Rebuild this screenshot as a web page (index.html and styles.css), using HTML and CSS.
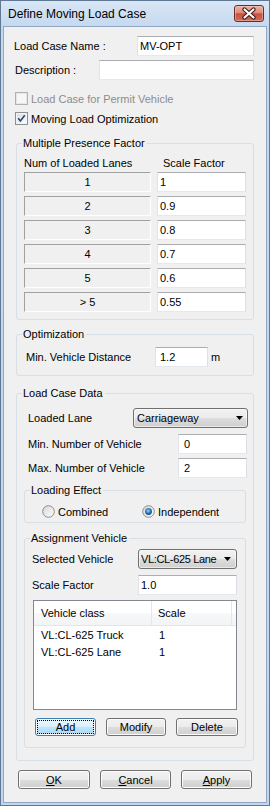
FILE: index.html
```html
<!DOCTYPE html>
<html>
<head>
<meta charset="utf-8">
<link rel="stylesheet" href="styles.css">
</head>
<body>
<div class="window">
  <div class="titlebar">
    <span class="title">Define Moving Load Case</span>
    <div class="close-btn">
      <svg width="28" height="15" viewBox="0 0 28 15">
        <path d="M9.5 3.5 L18.5 11.5 M18.5 3.5 L9.5 11.5" stroke="#3d1511" stroke-width="4.2" stroke-linecap="round" fill="none"/>
        <path d="M9.5 3.5 L18.5 11.5 M18.5 3.5 L9.5 11.5" stroke="#ffffff" stroke-width="2.2" stroke-linecap="round" fill="none"/>
      </svg>
    </div>
  </div>
  <div class="client">
    <div class="field-row r-name"><span class="lbl w-name">Load Case Name :</span><div class="tb w-name-tb">MV-OPT</div></div>
    <div class="field-row r-desc"><span class="lbl w-desc">Description :</span><div class="tb w-desc-tb"></div></div>

    <div class="check-row c1 disabled">
      <svg class="chk" width="13" height="13" viewBox="0 0 13 13"><rect x="0.5" y="0.5" width="12" height="12" fill="#f4f4f4" stroke="#b1b1b1"/><rect x="1.5" y="1.5" width="10" height="10" fill="#f7f7f7" stroke="#e6e6e6"/></svg>
      <span>Load Case for Permit Vehicle</span>
    </div>
    <div class="check-row c2">
      <svg class="chk" width="13" height="13" viewBox="0 0 13 13">
        <defs><linearGradient id="cg" x1="0" y1="0" x2="1" y2="1"><stop offset="0" stop-color="#dedede"/><stop offset="1" stop-color="#fbfbfb"/></linearGradient></defs>
        <rect x="0.5" y="0.5" width="12" height="12" fill="#f4f4f4" stroke="#8f8f8f"/>
        <rect x="2" y="2" width="9" height="9" fill="url(#cg)"/>
        <path d="M3.2 6.3 L5.4 9 L9.8 3.2" stroke="#2c4a82" stroke-width="1.7" fill="none"/>
      </svg>
      <span>Moving Load Optimization</span>
    </div>

    <div class="group g-mpf">
      <span class="legend">Multiple Presence Factor</span>
      <div class="mpf-grid mpf-head"><span>Num of Loaded Lanes</span><span class="sf">Scale Factor</span></div>
      <div class="mpf-grid mpf-rows">
        <div class="sunken">1</div><div class="tb">1</div>
        <div class="sunken">2</div><div class="tb">0.9</div>
        <div class="sunken">3</div><div class="tb">0.8</div>
        <div class="sunken">4</div><div class="tb">0.7</div>
        <div class="sunken">5</div><div class="tb">0.6</div>
        <div class="sunken">&gt; 5</div><div class="tb">0.55</div>
      </div>
    </div>

    <div class="group g-opt">
      <span class="legend">Optimization</span>
      <div class="opt-row"><span class="lbl w-opt">Min. Vehicle Distance</span><div class="tb w-opt-tb">1.2</div><span class="unit">m</span></div>
    </div>

    <div class="group g-lcd">
      <span class="legend">Load Case Data</span>
      <div class="lcd-row"><span class="lbl w-lane">Loaded Lane</span>
        <div class="combo w-lane-cb"><span class="ctext">Carriageway</span><svg class="arrow" width="7" height="4" viewBox="0 0 7 4"><path d="M0 0H7L3.5 4Z" fill="#000"/></svg></div>
      </div>
      <div class="lcd-row r-min"><span class="lbl w-num">Min. Number of Vehicle</span><div class="tb w-num-tb">0</div></div>
      <div class="lcd-row r-max"><span class="lbl w-num">Max. Number of Vehicle</span><div class="tb w-num-tb">2</div></div>

      <div class="group g-le">
        <span class="legend">Loading Effect</span>
        <div class="radio-row">
          <div class="radio">
            <svg width="13" height="13" viewBox="0 0 13 13">
              <defs><linearGradient id="rg" x1="0" y1="0" x2="1" y2="1"><stop offset="0" stop-color="#d8d8d8"/><stop offset="1" stop-color="#fcfcfc"/></linearGradient></defs>
              <circle cx="6.5" cy="6.5" r="5.8" fill="url(#rg)" stroke="#8c8c8c"/>
            </svg>
            <span>Combined</span>
          </div>
          <div class="radio">
            <svg width="13" height="13" viewBox="0 0 13 13">
              <defs>
                <linearGradient id="rg2" x1="0" y1="0" x2="1" y2="1"><stop offset="0" stop-color="#d8d8d8"/><stop offset="1" stop-color="#fcfcfc"/></linearGradient>
                <radialGradient id="dot" cx="0.45" cy="0.4" r="0.6"><stop offset="0" stop-color="#a5dcfb"/><stop offset="0.45" stop-color="#3d8fd0"/><stop offset="1" stop-color="#0d3e75"/></radialGradient>
              </defs>
              <circle cx="6.5" cy="6.5" r="5.8" fill="url(#rg2)" stroke="#8c8c8c"/>
              <circle cx="6.5" cy="6.5" r="3.4" fill="url(#dot)"/>
            </svg>
            <span>Independent</span>
          </div>
        </div>
      </div>

      <div class="group g-av">
        <span class="legend">Assignment Vehicle</span>
        <div class="av-row"><span class="lbl w-av">Selected Vehicle</span>
          <div class="combo w-av-cb"><span class="ctext tight">VL:CL-625 Lane</span><svg class="arrow" width="7" height="4" viewBox="0 0 7 4"><path d="M0 0H7L3.5 4Z" fill="#000"/></svg></div>
        </div>
        <div class="av-row r-scale"><span class="lbl w-av">Scale Factor</span><div class="tb w-av-cb">1.0</div></div>
        <div class="list">
          <div class="list-head"><span class="hcell">Vehicle class</span><span class="hcell">Scale</span></div>
          <div class="list-body">
            <div class="list-row"><span>VL:CL-625 Truck</span><span>1</span></div>
            <div class="list-row"><span>VL:CL-625 Lane</span><span>1</span></div>
          </div>
        </div>
        <div class="btn-row">
          <div class="btn default w-add">Add</div>
          <div class="btn w-mod">Modify</div>
          <div class="btn w-del">Delete</div>
        </div>
      </div>
    </div>

    <div class="bottom-row">
      <div class="btn big w-ok"><span><u>O</u>K</span></div>
      <div class="btn big w-cancel"><span><u>C</u>ancel</span></div>
      <div class="btn big w-apply"><span><u>A</u>pply</span></div>
    </div>
  </div>
</div>
</body>
</html>
```

FILE: styles.css
```css
html, body {
  margin: 0;
  padding: 0;
  background: #ffffff;
}

.window {
  width: 270px;
  height: 806px;
  box-sizing: border-box;
  border: 1px solid #5f7894;
  background: linear-gradient(#d9e7f6 0, #c4d8ee 26px, #c2d6ec 100%);
  padding: 0 3px 3px 3px;
  display: flex;
  flex-direction: column;
}

.titlebar {
  height: 26px;
  flex-shrink: 0;
  display: flex;
  align-items: flex-start;
}

.title {
  font-family: "Liberation Sans", Arial, sans-serif;
  font-size: 12px;
  line-height: 15px;
  color: #000;
  margin: 6px 0 0 4px;
}

.close-btn {
  margin: 4px 2px 0 auto;
  width: 30px;
  height: 17px;
  box-sizing: border-box;
  border: 1px solid #6b2b26;
  border-radius: 3px;
  background: linear-gradient(#ebb3a9 0%, #dc8a7c 45%, #c9503f 52%, #cf6d58 100%);
  box-shadow: inset 0 0 0 1px rgba(255, 210, 200, 0.45);
}

.close-btn svg {
  display: block;
}

.client {
  flex: 1;
  background: #f0f0f0;
  box-shadow: 0 0 0 1px #90a8c3;
  display: flex;
  flex-direction: column;
  font-family: "Liberation Sans", Arial, sans-serif;
  font-size: 11px;
  color: #000;
}

.client > * {
  flex-shrink: 0;
}

.lbl {
  white-space: nowrap;
  flex-shrink: 0;
}

.tb {
  box-sizing: border-box;
  height: 20px;
  background: #ffffff;
  border: 1px solid;
  border-color: #abadb3 #dbdfe6 #e3e9ef #e2e3ea;
  padding-left: 2px;
  line-height: 18px;
  white-space: nowrap;
  flex-shrink: 0;
}

/* top fields */
.field-row {
  display: flex;
  align-items: center;
  height: 20px;
  margin-left: 10px;
}

.r-name { margin-top: 9px; }
.r-desc { margin-top: 4px; margin-left: 11px; }

.w-name { width: 123px; }
.w-name-tb { width: 117px; }
.w-desc { width: 84px; }
.w-desc-tb { width: 155px; }

.check-row {
  display: flex;
  align-items: center;
  gap: 3px;
  height: 13px;
  margin-left: 11px;
}

.check-row .chk { display: block; flex-shrink: 0; }
.c1 { margin-top: 12px; }
.c2 { margin-top: 7px; }
.disabled span { color: #8d8d8d; }

/* groups */
.group {
  position: relative;
  box-sizing: border-box;
  border: 1px solid #d5dfe5;
  border-radius: 3px;
  flex-shrink: 0;
}

.legend {
  position: absolute;
  top: -7px;
  left: 5px;
  padding: 0 2px 0 1px;
  line-height: 13px;
  background: #f0f0f0;
  white-space: nowrap;
}

.g-mpf {
  margin: 18px 0 0 12px;
  width: 238px;
  height: 177px;
  padding: 12px 0 0 7px;
}

.mpf-grid {
  display: grid;
  grid-template-columns: 127px 89px;
  column-gap: 6px;
}

.mpf-head {
  height: 14px;
  line-height: 14px;
}

.mpf-head .sf { padding-left: 6px; }

.mpf-rows {
  margin-top: 2px;
  grid-auto-rows: 20px;
  row-gap: 4px;
}

.sunken {
  box-sizing: border-box;
  border: 1px solid;
  border-color: #a0a0a0 #ffffff #ffffff #a0a0a0;
  text-align: center;
  line-height: 18px;
}

.g-opt {
  margin: 14px 0 0 12px;
  width: 238px;
  height: 42px;
  padding: 12px 0 0 9px;
}

.opt-row {
  display: flex;
  align-items: center;
  height: 20px;
}

.w-opt { width: 129px; }
.w-opt-tb { width: 53px; padding-left: 4px; }
.unit { margin-left: 3px; }

.g-lcd {
  margin: 17px 0 0 12px;
  width: 238px;
  height: 368px;
  padding: 14px 0 0 7px;
}

.lcd-row {
  display: flex;
  align-items: center;
  height: 20px;
  margin-left: 4px;
}

.r-min { margin-top: 6px; }
.r-max { margin-top: 4px; }

.w-lane { width: 105px; }
.w-lane-cb { width: 115px; }
.w-num { width: 150px; }
.w-num-tb { width: 69px; padding-left: 5px; }

.combo {
  box-sizing: border-box;
  height: 20px;
  border: 1px solid #707070;
  border-radius: 3px;
  background: linear-gradient(#f2f2f2 0%, #ebebeb 50%, #dddddd 50%, #cfcfcf 100%);
  box-shadow: inset 0 0 0 1px rgba(255, 255, 255, 0.55);
  display: flex;
  align-items: center;
  padding: 0 4px 0 3px;
  white-space: nowrap;
  flex-shrink: 0;
}

.ctext {
  flex: 1;
  min-width: 0;
  overflow: hidden;
}

.ctext.tight { letter-spacing: -0.35px; }

.combo .arrow {
  margin-left: 4px;
  display: block;
  flex-shrink: 0;
}

.g-le {
  margin-top: 12px;
  width: 222px;
  height: 33px;
  padding: 14px 0 0 17px;
}

.radio-row {
  display: grid;
  grid-template-columns: 100px auto;
  height: 13px;
}

.radio {
  display: flex;
  align-items: center;
  gap: 3px;
}

.radio svg { display: block; flex-shrink: 0; }

.g-av {
  margin-top: 15px;
  width: 222px;
  height: 210px;
  padding: 10px 0 0 7px;
}

.av-row {
  display: flex;
  align-items: center;
  height: 20px;
}

.r-scale { margin-top: 6px; }
.w-av { width: 106px; }
.w-av-cb { width: 99px; }
.av-row .combo { padding-left: 2px; padding-right: 5px; }

.list {
  margin: 5px 0 0 1px;
  width: 204px;
  height: 110px;
  box-sizing: border-box;
  border: 1px solid #828790;
  background: #ffffff;
}

.list-head {
  display: grid;
  grid-template-columns: 118px 80px;
  height: 24px;
  border-bottom: 1px solid #e5e5e5;
  background: linear-gradient(#ffffff 0%, #ffffff 50%, #f7f8fa 50%, #f3f4f6 100%);
}

.hcell {
  line-height: 24px;
  padding-left: 7px;
  border-right: 1px solid #e3e8ee;
}

.hcell + .hcell { padding-left: 6px; }

.list-body { padding-top: 1px; }

.list-row {
  display: grid;
  grid-template-columns: 118px 80px;
  height: 17px;
  line-height: 17px;
}

.list-row span:first-child { padding-left: 7px; }
.list-row span + span { padding-left: 7px; }

.btn-row {
  display: flex;
  gap: 10px;
  margin: 8px 0 0 3px;
}

.btn {
  box-sizing: border-box;
  height: 18px;
  border: 1px solid #707070;
  border-radius: 3px;
  background: linear-gradient(#f2f2f2 0%, #ebebeb 50%, #dddddd 50%, #cfcfcf 100%);
  box-shadow: inset 0 0 0 1px #fcfcfc;
  display: flex;
  align-items: center;
  justify-content: center;
  flex-shrink: 0;
}

.btn.default {
  border-color: #3c7fb1;
  background: linear-gradient(#eaf6fd 0%, #d9f0fc 50%, #bee6fd 50%, #a7d9f5 100%);
  outline: 1px dotted #000;
  outline-offset: -3px;
}

.w-add { width: 61px; }
.w-mod { width: 60px; }
.w-del { width: 62px; }

.bottom-row {
  display: flex;
  gap: 10px;
  margin: 9px 0 0 14px;
}

.btn.big { height: 19px; }
.w-ok { width: 72px; }
.w-cancel { width: 71px; }
.w-apply { width: 71px; }

u { text-decoration: underline; text-underline-offset: 1px; }
```
